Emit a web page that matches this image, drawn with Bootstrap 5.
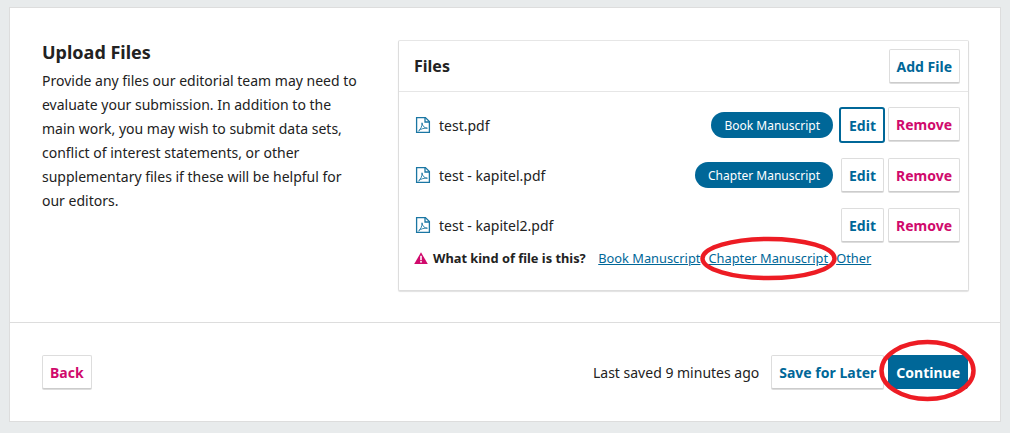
<!DOCTYPE html>
<html lang="en">
<head>
<meta charset="utf-8">
<title>Upload Files</title>
<link href="https://cdn.jsdelivr.net/npm/bootstrap@5.3.0/dist/css/bootstrap.min.css" rel="stylesheet">
<style>
html,body{height:433px;overflow:hidden}
body{background:#e8ebec;font-family:"Noto Sans",sans-serif;font-size:14px;color:#222;padding:8px 10px 12px;position:relative}
.wiz-panel{background:#fff;height:413px;box-shadow:0 0 0 1px #ddd;display:flex;flex-direction:column}
.wiz-main{height:315px;padding:32px 32px 0;display:flex;border-bottom:1px solid #ddd}
.wiz-side{width:356px;flex:none}
.wiz-side h2{font-size:18px;font-weight:700;line-height:24px;margin:0 0 5px;color:#222}
.wiz-side p{line-height:24px;margin:0;width:318px}
.files-box{width:571px;flex:none;height:251px;border:1px solid #ddd;border-top-color:#e6e6e6;border-radius:2px;box-shadow:0 1px 1px rgba(0,0,0,.12);background:#fff}
.files-head{height:51px;border-bottom:1px solid #e6e6e6;padding:8px 8px 0 15px}
.files-head h3{font-size:16px;font-weight:700;margin:0;line-height:34px;color:#222}
.files-body{padding:15px 8px 0 16px}
.file-row{height:36px;margin-bottom:14px}
.file-icon{width:16px;height:18px;margin-right:8px;flex:none}
.file-name{color:#222}
.tag-pill{background:#006798;color:#fff;border-radius:13px;font-size:12px;height:26px;line-height:27px;padding:0 13px;margin-right:8px}
.pkp-btn{display:inline-block;background:#fff;border:1px solid #ddd;border-bottom-color:#ccc;border-radius:2px;box-shadow:0 1px 0 #ddd;font-size:14px;font-weight:700;line-height:32px;height:34px;padding:1px 7px 0;color:#006798;text-decoration:none}
.pkp-btn:hover{color:#006798;background:#fff;border-color:#ddd}
.pkp-btn.danger,.pkp-btn.danger:hover{color:#d00a6c}
.pkp-btn.focused{border:2px solid #006798;border-radius:3px;line-height:32px;height:36px;padding:1px 7px 0 8px;box-shadow:none;margin:0 -1px 0 -2px}
.pkp-btn.solid,.pkp-btn.solid:hover{background:#006798;border-color:#006798;color:#fff;box-shadow:none}
.row-btns{gap:4px}
.kind-row{margin-top:-8px;margin-left:-1px;line-height:18px;height:18px}
.kind-row svg{margin-right:5px;flex:none}
.kind-row strong{font-weight:700;color:#222;margin-right:12.5px;font-size:12.83px}
.kind-row a{color:#006798;margin-right:8px;font-size:12.83px}
.wiz-foot{padding:32px 32px 0;display:flex;align-items:flex-start;justify-content:space-between}
.saved-note{margin-right:8px}
.foot-btns{gap:4px}
.mark-ring{position:absolute;left:0;top:0;pointer-events:none}
</style>
</head>
<body>
<div class="wiz-panel">
  <div class="wiz-main">
    <div class="wiz-side">
      <h2>Upload Files</h2>
      <p>Provide any files our editorial team may need to evaluate your submission. In addition to the main work, you may wish to submit data sets, conflict of interest statements, or other supplementary files if these will be helpful for our editors.</p>
    </div>
    <div class="files-box">
      <div class="files-head d-flex justify-content-between align-items-start">
        <h3>Files</h3>
        <a class="pkp-btn" href="#">Add File</a>
      </div>
      <div class="files-body">
        <div class="file-row d-flex align-items-center">
          <svg class="file-icon" viewBox="0 0 16 18" fill="none" stroke="#1a76a3" stroke-width="1.3"><path d="M1.6 1.6H10.4L14.4 5.6V16.4H1.6Z"/><path d="M10 1.6V6H14.4"/><path stroke-width=".9" d="M3.6 14.8C5.6 13.4 7.2 10.4 7 6.8 7.4 10 9.2 12 12.4 12.2 9.4 11.8 6 12.8 3.6 14.8Z"/></svg>
          <span class="file-name me-auto">test.pdf</span>
          <span class="tag-pill">Book Manuscript</span>
          <div class="d-flex row-btns"><a class="pkp-btn focused" href="#">Edit</a><a class="pkp-btn danger" href="#">Remove</a></div>
        </div>
        <div class="file-row d-flex align-items-center">
          <svg class="file-icon" viewBox="0 0 16 18" fill="none" stroke="#1a76a3" stroke-width="1.3"><path d="M1.6 1.6H10.4L14.4 5.6V16.4H1.6Z"/><path d="M10 1.6V6H14.4"/><path stroke-width=".9" d="M3.6 14.8C5.6 13.4 7.2 10.4 7 6.8 7.4 10 9.2 12 12.4 12.2 9.4 11.8 6 12.8 3.6 14.8Z"/></svg>
          <span class="file-name me-auto">test - kapitel.pdf</span>
          <span class="tag-pill">Chapter Manuscript</span>
          <div class="d-flex row-btns"><a class="pkp-btn" href="#">Edit</a><a class="pkp-btn danger" href="#">Remove</a></div>
        </div>
        <div class="file-row d-flex align-items-center">
          <svg class="file-icon" viewBox="0 0 16 18" fill="none" stroke="#1a76a3" stroke-width="1.3"><path d="M1.6 1.6H10.4L14.4 5.6V16.4H1.6Z"/><path d="M10 1.6V6H14.4"/><path stroke-width=".9" d="M3.6 14.8C5.6 13.4 7.2 10.4 7 6.8 7.4 10 9.2 12 12.4 12.2 9.4 11.8 6 12.8 3.6 14.8Z"/></svg>
          <span class="file-name me-auto">test - kapitel2.pdf</span>
          <div class="d-flex row-btns"><a class="pkp-btn" href="#">Edit</a><a class="pkp-btn danger" href="#">Remove</a></div>
        </div>
        <div class="kind-row d-flex align-items-center">
          <svg width="14" height="12" viewBox="0 0 14 12"><path d="M7 0.3 13.8 12H.2Z" fill="#d00a6c"/><rect x="6.2" y="3.8" width="1.6" height="4.4" fill="#fff"/><rect x="6.2" y="9" width="1.6" height="1.6" fill="#fff"/></svg>
          <strong>What kind of file is this?</strong>
          <a href="#">Book Manuscript</a><a href="#">Chapter Manuscript</a><a href="#">Other</a>
        </div>
      </div>
    </div>
  </div>
  <div class="wiz-foot">
    <a class="pkp-btn danger" href="#">Back</a>
    <div class="d-flex align-items-center foot-btns">
      <span class="saved-note">Last saved 9 minutes ago</span>
      <a class="pkp-btn" href="#">Save for Later</a>
      <a class="pkp-btn solid" href="#">Continue</a>
    </div>
  </div>
</div>
<svg class="mark-ring" width="1010" height="433" viewBox="0 0 1010 433" fill="none" stroke="#ed1c24" stroke-width="4.5">
  <ellipse cx="768.5" cy="258.5" rx="66" ry="19.5"/>
  <ellipse cx="927.5" cy="370.5" rx="46" ry="28.5"/>
</svg>
</body>
</html>
